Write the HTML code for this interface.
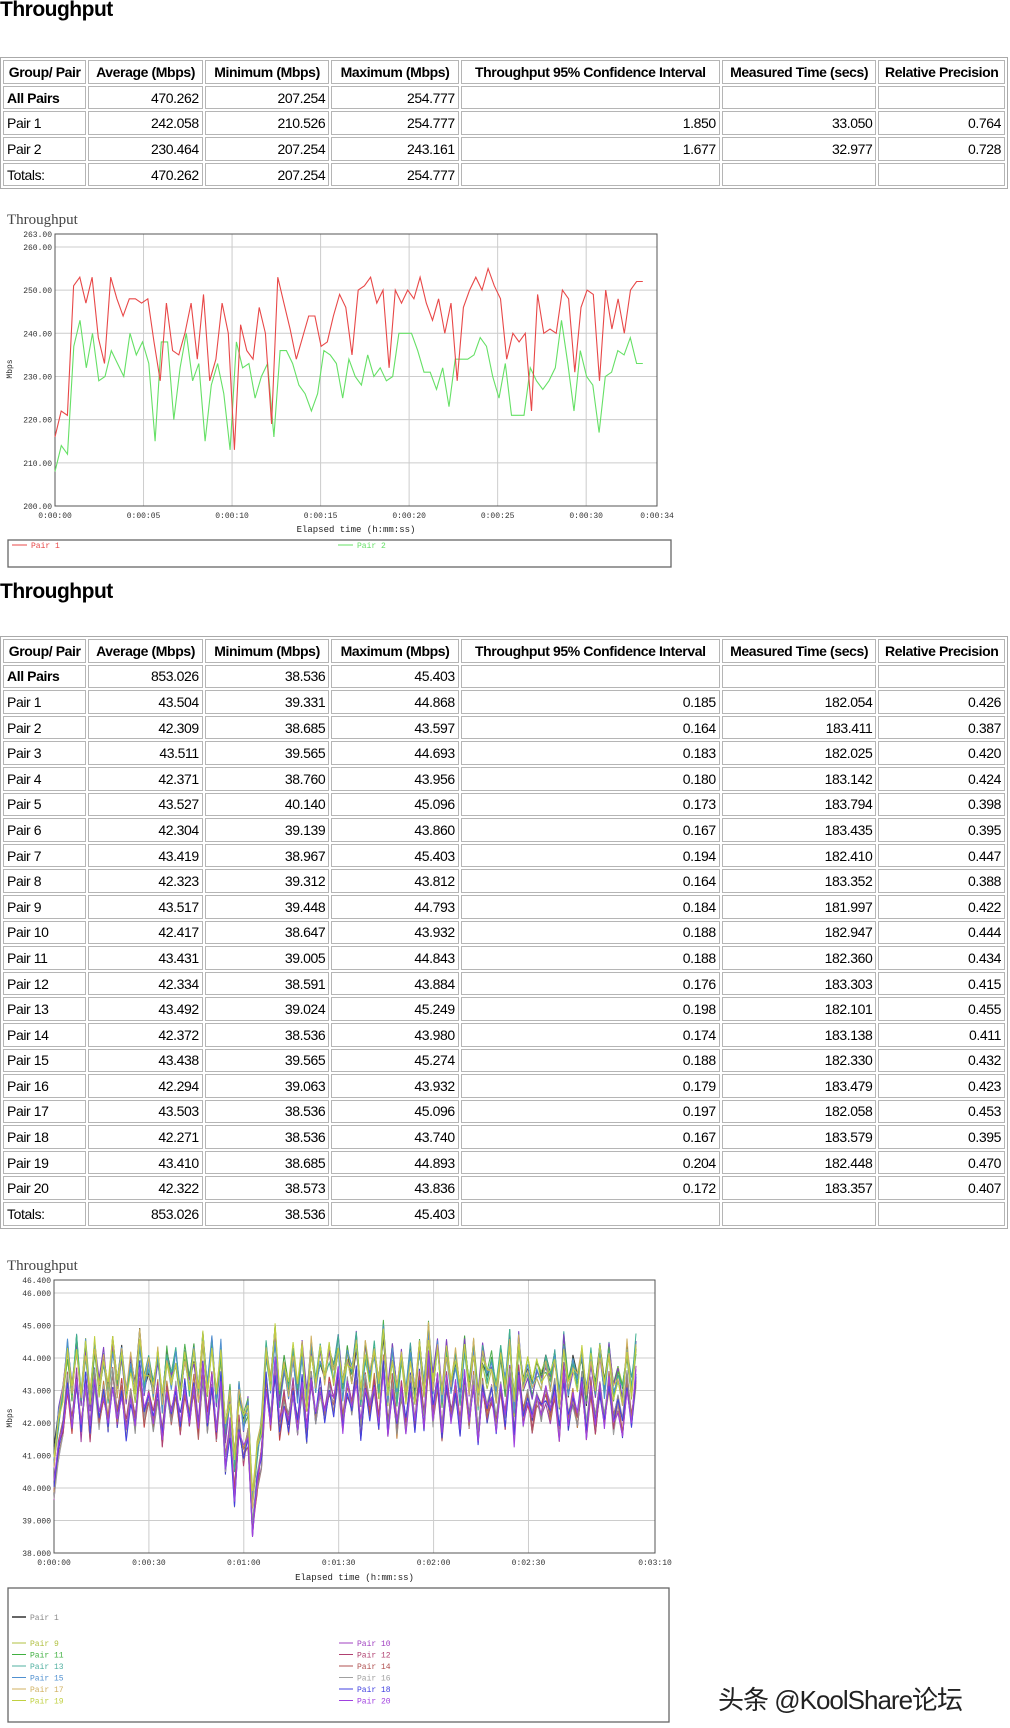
<!DOCTYPE html>
<html><head><meta charset="utf-8">
<style>
body{margin:0;width:1010px;height:1728px;background:#fff;position:relative;overflow:hidden;font-family:"Liberation Sans","Noto Sans CJK SC",sans-serif;color:#000}
h2{position:absolute;left:0;margin:0;font-size:21px;font-weight:bold;letter-spacing:-0.5px}
table{position:absolute;left:0;border-collapse:separate;border-spacing:2px;background:#fff;border:1px solid #aaa;width:1008px;table-layout:fixed}
td,th{border:1px solid #b5b5b5;padding:0 3px;font-size:14px;letter-spacing:-0.4px;white-space:nowrap;overflow:hidden;text-align:right;font-weight:normal}
th{font-weight:bold;text-align:center}
td:first-child{text-align:left}
tr.b td:first-child{font-weight:bold}
.t1 td,.t1 th{height:21.7px}
.t2 td,.t2 th{height:21.6px}
svg{position:absolute;left:0}
.mono{font-family:"Liberation Mono",monospace}
</style></head><body>
<h2 style="top:-2px">Throughput</h2>
<table class="t1" style="top:57px">
<colgroup><col style="width:83px"><col style="width:114px"><col style="width:124px"><col style="width:127px"><col style="width:258px"><col style="width:154px"><col style="width:126px"></colgroup>
<tr><th>Group/ Pair</th><th>Average (Mbps)</th><th>Minimum (Mbps)</th><th>Maximum (Mbps)</th><th>Throughput 95% Confidence Interval</th><th>Measured Time (secs)</th><th>Relative Precision</th></tr>
<tr class="b"><td>All Pairs</td><td>470.262</td><td>207.254</td><td>254.777</td><td></td><td></td><td></td></tr>
<tr><td>Pair 1</td><td>242.058</td><td>210.526</td><td>254.777</td><td>1.850</td><td>33.050</td><td>0.764</td></tr>
<tr><td>Pair 2</td><td>230.464</td><td>207.254</td><td>243.161</td><td>1.677</td><td>32.977</td><td>0.728</td></tr>
<tr><td>Totals:</td><td>470.262</td><td>207.254</td><td>254.777</td><td></td><td></td><td></td></tr>
</table>

<svg id="c1" width="680" height="375" style="top:204px"></svg>

<h2 style="top:580px">Throughput</h2>
<table class="t2" style="top:636px">
<colgroup><col style="width:83px"><col style="width:114px"><col style="width:124px"><col style="width:127px"><col style="width:258px"><col style="width:154px"><col style="width:126px"></colgroup>
<tr><th>Group/ Pair</th><th>Average (Mbps)</th><th>Minimum (Mbps)</th><th>Maximum (Mbps)</th><th>Throughput 95% Confidence Interval</th><th>Measured Time (secs)</th><th>Relative Precision</th></tr>
<tr class="b"><td>All Pairs</td><td>853.026</td><td>38.536</td><td>45.403</td><td></td><td></td><td></td></tr>
<tr><td>Pair 1</td><td>43.504</td><td>39.331</td><td>44.868</td><td>0.185</td><td>182.054</td><td>0.426</td></tr>
<tr><td>Pair 2</td><td>42.309</td><td>38.685</td><td>43.597</td><td>0.164</td><td>183.411</td><td>0.387</td></tr>
<tr><td>Pair 3</td><td>43.511</td><td>39.565</td><td>44.693</td><td>0.183</td><td>182.025</td><td>0.420</td></tr>
<tr><td>Pair 4</td><td>42.371</td><td>38.760</td><td>43.956</td><td>0.180</td><td>183.142</td><td>0.424</td></tr>
<tr><td>Pair 5</td><td>43.527</td><td>40.140</td><td>45.096</td><td>0.173</td><td>183.794</td><td>0.398</td></tr>
<tr><td>Pair 6</td><td>42.304</td><td>39.139</td><td>43.860</td><td>0.167</td><td>183.435</td><td>0.395</td></tr>
<tr><td>Pair 7</td><td>43.419</td><td>38.967</td><td>45.403</td><td>0.194</td><td>182.410</td><td>0.447</td></tr>
<tr><td>Pair 8</td><td>42.323</td><td>39.312</td><td>43.812</td><td>0.164</td><td>183.352</td><td>0.388</td></tr>
<tr><td>Pair 9</td><td>43.517</td><td>39.448</td><td>44.793</td><td>0.184</td><td>181.997</td><td>0.422</td></tr>
<tr><td>Pair 10</td><td>42.417</td><td>38.647</td><td>43.932</td><td>0.188</td><td>182.947</td><td>0.444</td></tr>
<tr><td>Pair 11</td><td>43.431</td><td>39.005</td><td>44.843</td><td>0.188</td><td>182.360</td><td>0.434</td></tr>
<tr><td>Pair 12</td><td>42.334</td><td>38.591</td><td>43.884</td><td>0.176</td><td>183.303</td><td>0.415</td></tr>
<tr><td>Pair 13</td><td>43.492</td><td>39.024</td><td>45.249</td><td>0.198</td><td>182.101</td><td>0.455</td></tr>
<tr><td>Pair 14</td><td>42.372</td><td>38.536</td><td>43.980</td><td>0.174</td><td>183.138</td><td>0.411</td></tr>
<tr><td>Pair 15</td><td>43.438</td><td>39.565</td><td>45.274</td><td>0.188</td><td>182.330</td><td>0.432</td></tr>
<tr><td>Pair 16</td><td>42.294</td><td>39.063</td><td>43.932</td><td>0.179</td><td>183.479</td><td>0.423</td></tr>
<tr><td>Pair 17</td><td>43.503</td><td>38.536</td><td>45.096</td><td>0.197</td><td>182.058</td><td>0.453</td></tr>
<tr><td>Pair 18</td><td>42.271</td><td>38.536</td><td>43.740</td><td>0.167</td><td>183.579</td><td>0.395</td></tr>
<tr><td>Pair 19</td><td>43.410</td><td>38.685</td><td>44.893</td><td>0.204</td><td>182.448</td><td>0.470</td></tr>
<tr><td>Pair 20</td><td>42.322</td><td>38.573</td><td>43.836</td><td>0.172</td><td>183.357</td><td>0.407</td></tr>
<tr><td>Totals:</td><td>853.026</td><td>38.536</td><td>45.403</td><td></td><td></td><td></td></tr>
</table>

<svg id="c2" width="680" height="480" style="top:1248px"></svg>

<div style="position:absolute;left:718px;top:1680px;font-size:26px;color:#222;letter-spacing:-1px;text-shadow:1px 1px 0 #fff,-1px -1px 0 #fff">头条 @KoolShare论坛</div>

<script>
var NS="http://www.w3.org/2000/svg";
function el(svg,tag,a,txt){var e=document.createElementNS(NS,tag);for(var k in a)e.setAttribute(k,a[k]);if(txt!=null)e.textContent=txt;svg.appendChild(e);return e;}
var seed=7;function rnd(){seed=(seed*16807)%2147483647;return seed/2147483647;}

var s=document.getElementById('c1');
var L=55,R=657,T=30,B=302;
function y1(v){return B-(v-200)/63*(B-T);}
el(s,'text',{x:7,y:20,'font-size':15,fill:'#444','font-family':'Liberation Serif,serif'},'Throughput');
[200,210,220,230,240,250,260].forEach(function(v){el(s,'line',{x1:L,x2:R,y1:y1(v),y2:y1(v),stroke:'#ccc'});el(s,'text',{x:L-3,y:y1(v)+3,'font-size':8,'text-anchor':'end',fill:'#333',class:'mono'},v.toFixed(2));});
el(s,'text',{x:L-3,y:T+3,'font-size':8,'text-anchor':'end',fill:'#333',class:'mono'},'263.00');
for(var i=0;i<=6;i++){var x=L+i*5/34*(R-L);el(s,'line',{x1:x,x2:x,y1:T,y2:B,stroke:'#ccc'});el(s,'text',{x:x,y:B+12,'font-size':8,'text-anchor':'middle',fill:'#333',class:'mono'},'0:00:'+(i*5<10?'0':'')+i*5);}
el(s,'text',{x:R,y:B+12,'font-size':8,'text-anchor':'middle',fill:'#333',class:'mono'},'0:00:34');
el(s,'rect',{x:L,y:T,width:R-L,height:B-T,fill:'none',stroke:'#555'});
el(s,'text',{x:(L+R)/2,y:B+26,'font-size':9,'text-anchor':'middle',fill:'#222',class:'mono'},'Elapsed time (h:mm:ss)');
el(s,'text',{x:12,y:165,'font-size':8,fill:'#222',class:'mono',transform:'rotate(-90 12 165)','text-anchor':'middle'},'Mbps');
var red=[216,222,221,251,253,247,253,239,233,253,248,244,248,248,247,248,238,229,247,236,235,240,247,234,249,229,234,247,240,213,242,236,234,246,240,219,253,247,241,234,239,244,244,237,238,244,249,246,235,250,251,253,247,250,232,250,247,250,248,253,247,243,248,240,247,229,246,250,253,250,255,251,248,234,240,238,240,222,249,240,241,240,250,248,231,246,250,249,229,250,241,248,240,250,252,252];
var grn=[208,214,212,237,243,232,240,229,230,236,233,230,240,235,238,233,215,238,238,220,232,240,229,233,215,228,233,226,213,238,232,233,225,230,233,216,236,236,233,228,226,222,226,236,235,233,225,234,230,228,235,230,232,229,230,240,240,240,236,231,231,227,232,223,234,234,234,235,239,237,230,225,233,221,221,221,232,229,227,229,232,243,233,222,236,230,228,217,230,231,236,235,239,233,233];
function pl(d,f,col){var p=d.map(function(v,i){return (L+i*(33.2/(d.length-1))/34*(R-L)).toFixed(1)+','+f(v).toFixed(1);}).join(' ');el(s,'polyline',{points:p,fill:'none',stroke:col,'stroke-width':1.1});}
pl(grn,y1,'#66e066');pl(red,y1,'#e84848');
el(s,'rect',{x:8,y:336,width:663,height:27,fill:'none',stroke:'#666','stroke-width':1.3});
el(s,'line',{x1:12,x2:27,y1:341,y2:341,stroke:'#e84848'});el(s,'text',{x:31,y:344,'font-size':8,fill:'#e84848',class:'mono'},'Pair 1');
el(s,'line',{x1:338,x2:353,y1:341,y2:341,stroke:'#66e066'});el(s,'text',{x:357,y:344,'font-size':8,fill:'#66e066',class:'mono'},'Pair 2');

s=document.getElementById('c2');
L=54;R=655;T=32;B=305;
function y2(v){return B-(v-38)/8.4*(B-T);}
el(s,'text',{x:7,y:22,'font-size':15,fill:'#444','font-family':'Liberation Serif,serif'},'Throughput');
[38,39,40,41,42,43,44,45,46].forEach(function(v){el(s,'line',{x1:L,x2:R,y1:y2(v),y2:y2(v),stroke:'#ccc'});el(s,'text',{x:L-3,y:y2(v)+3,'font-size':8,'text-anchor':'end',fill:'#333',class:'mono'},v.toFixed(3));});
el(s,'text',{x:L-3,y:T+3,'font-size':8,'text-anchor':'end',fill:'#333',class:'mono'},'46.400');
var labs=['0:00:00','0:00:30','0:01:00','0:01:30','0:02:00','0:02:30'];
for(i=0;i<6;i++){x=L+i*30/190*(R-L);el(s,'line',{x1:x,x2:x,y1:T,y2:B,stroke:'#ccc'});el(s,'text',{x:x,y:B+12,'font-size':8,'text-anchor':'middle',fill:'#333',class:'mono'},labs[i]);}
el(s,'text',{x:R,y:B+12,'font-size':8,'text-anchor':'middle',fill:'#333',class:'mono'},'0:03:10');
el(s,'rect',{x:L,y:T,width:R-L,height:B-T,fill:'none',stroke:'#555'});
el(s,'text',{x:(L+R)/2,y:B+27,'font-size':9,'text-anchor':'middle',fill:'#222',class:'mono'},'Elapsed time (h:mm:ss)');
el(s,'text',{x:12,y:170,'font-size':8,fill:'#222',class:'mono',transform:'rotate(-90 12 170)','text-anchor':'middle'},'Mbps');
var cols=['#333','#c04040','#40a040','#4040c0','#a0c040','#a040a0','#40a0a0','#c08040','#8040c0','#a0a0a0','#50b050','#b04070','#40b090','#b06060','#5090d0','#909090','#d0b060','#4040e0','#c0d040','#a040e0'];
var n=130,base=[];for(i=0;i<n;i++){var v=43.1+((i%2)?0.7:-0.5)*(0.5+rnd())+(rnd()-.5)*0.6;if(i>=38&&i<=46){v-=1.2;if(i==40)v-=1.2;if(i==44||i==45)v-=1.8;}if(i<2)v=40.5+i*1.2;base.push(v);}
for(var p=0;p<20;p++){var off=(p%2?-0.55:0.45);var pts=[];for(i=0;i<n;i++){var vv=base[i]+off+(rnd()-.5)*0.7;if(vv>45.2)vv=45.2;if(vv<38.5)vv=38.5;pts.push((L+i*(184/(n-1))/190*(R-L)).toFixed(1)+','+y2(vv).toFixed(1));}el(s,'polyline',{points:pts.join(' '),fill:'none',stroke:cols[p],'stroke-width':1});}
el(s,'rect',{x:8,y:340,width:661,height:134,fill:'none',stroke:'#666','stroke-width':1.3});
el(s,'line',{x1:12,x2:26,y1:369,y2:369,stroke:'#333','stroke-width':1.5});el(s,'text',{x:30,y:372,'font-size':8,fill:'#888',class:'mono'},'Pair 1');
var lc=['#b0c040','#40b040','#50b0a0','#5090d0','#d0b060','#c0d040'],rc=['#a040c0','#b04070','#b05050','#a0a0a0','#4040e0','#a040e0'];
var ll=['Pair 9','Pair 11','Pair 13','Pair 15','Pair 17','Pair 19'],rl=['Pair 10','Pair 12','Pair 14','Pair 16','Pair 18','Pair 20'];
for(i=0;i<6;i++){var yy=395+i*11.5;el(s,'line',{x1:12,x2:26,y1:yy,y2:yy,stroke:lc[i]});el(s,'text',{x:30,y:yy+3,'font-size':8,fill:lc[i],class:'mono'},ll[i]);el(s,'line',{x1:339,x2:353,y1:yy,y2:yy,stroke:rc[i]});el(s,'text',{x:357,y:yy+3,'font-size':8,fill:rc[i],class:'mono'},rl[i]);}
</script>
</body></html>
